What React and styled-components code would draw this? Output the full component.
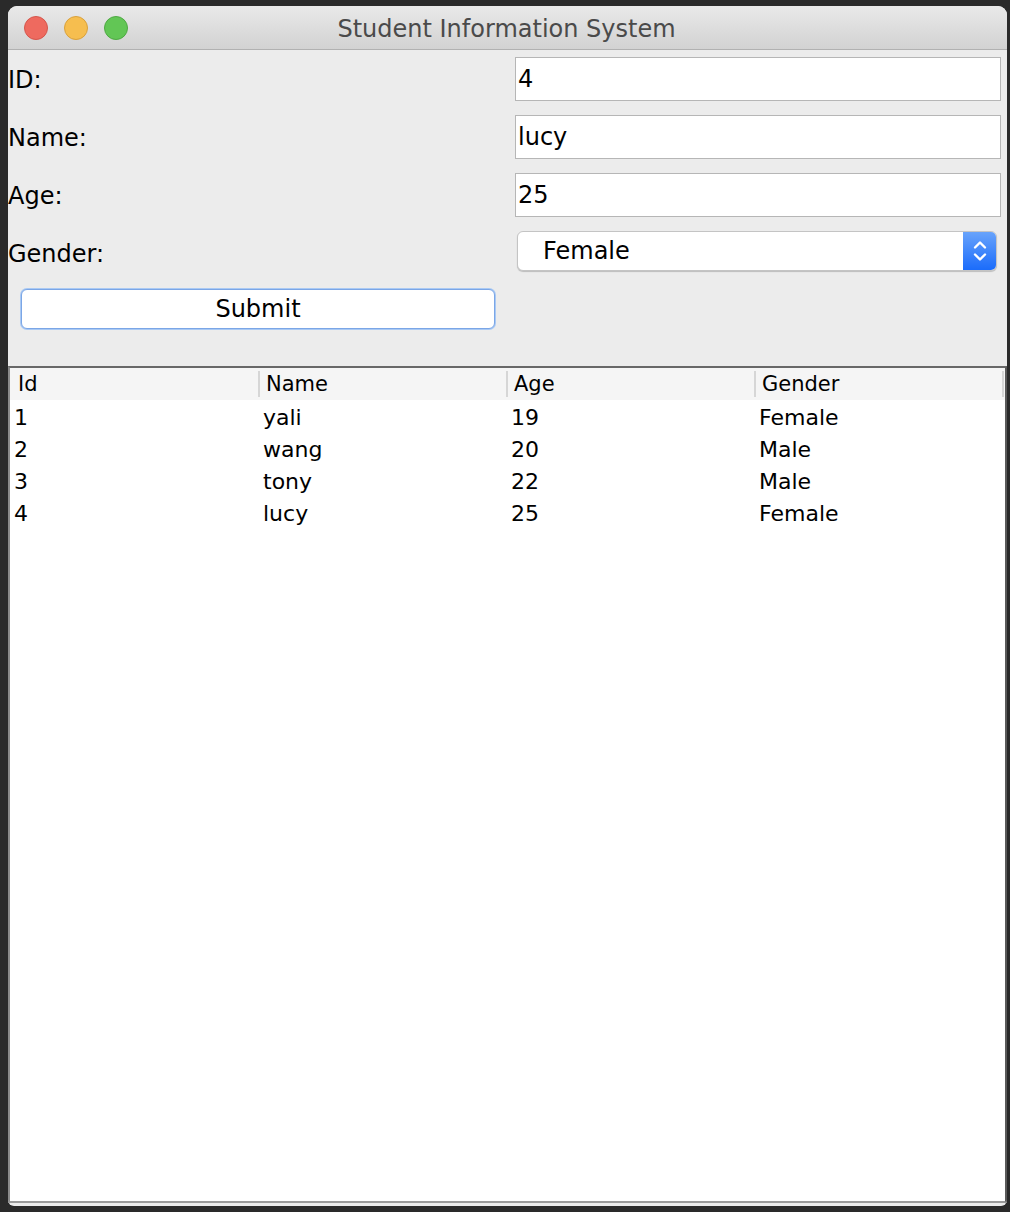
import React from "react";
import styled, { createGlobalStyle } from "styled-components";

const students = [
  { id: 1, name: "yali", age: 19, gender: "Female" },
  { id: 2, name: "wang", age: 20, gender: "Male" },
  { id: 3, name: "tony", age: 22, gender: "Male" },
  { id: 4, name: "lucy", age: 25, gender: "Female" },
];

const fields = [
  { label: "ID:", value: "4" },
  { label: "Name:", value: "lucy" },
  { label: "Age:", value: "25" },
];

function App() {
  return (
    <>
      <GlobalStyle />
      <Window>
        <TitleBar>
          <Lights>
            <Light color="#ee6a5f" edge="#d5564c" />
            <Light color="#f6be4f" edge="#d9a13c" />
            <Light color="#62c655" edge="#4ea943" />
          </Lights>
          <Title>Student Information System</Title>
        </TitleBar>

        {/* form grid: label on the left, control on the right */}
        <Form>
          {fields.map((f) => (
            <React.Fragment key={f.label}>
              <Label>{f.label}</Label>
              <Cell>
                <TextField readOnly defaultValue={f.value} />
              </Cell>
            </React.Fragment>
          ))}
          <Label>Gender:</Label>
          <Cell>
            <Combo>
              <ComboText>Female</ComboText>
              <Stepper>
                <svg width="16" height="26" viewBox="0 0 16 26" fill="none">
                  <path d="M3 9.5 L8 4.5 L13 9.5" stroke="#fff" strokeWidth="2.4" strokeLinecap="round" strokeLinejoin="round" />
                  <path d="M3 16.5 L8 21.5 L13 16.5" stroke="#fff" strokeWidth="2.4" strokeLinecap="round" strokeLinejoin="round" />
                </svg>
              </Stepper>
            </Combo>
          </Cell>
          <ButtonCell>
            <SubmitButton>Submit</SubmitButton>
          </ButtonCell>
          <div />
        </Form>

        <TablePane>
          <HeaderRow>
            <HeadCell first>Id</HeadCell>
            <HeadCell>Name</HeadCell>
            <HeadCell>Age</HeadCell>
            <HeadCell>Gender</HeadCell>
          </HeaderRow>
          {students.map((s) => (
            <Row key={s.id}>
              <BodyCell first>{s.id}</BodyCell>
              <BodyCell>{s.name}</BodyCell>
              <BodyCell>{s.age}</BodyCell>
              <BodyCell>{s.gender}</BodyCell>
            </Row>
          ))}
        </TablePane>
      </Window>
    </>
  );
}

const GlobalStyle = createGlobalStyle`
  html, body {
    margin: 0;
    background: #2a2a2a;
  }
  body {
    font-family: "DejaVu Sans", "Liberation Sans", sans-serif;
    color: #000;
  }
`;

const Window = styled.div`
  margin: 6px 0 0 8px;
  width: 999px;
  height: 1200px;
  display: flex;
  flex-direction: column;
  background: #ececec;
  border-radius: 9px 9px 6px 6px;
  overflow: hidden;
`;

const TitleBar = styled.div`
  position: relative;
  height: 43px;
  flex-shrink: 0;
  display: flex;
  align-items: center;
  justify-content: center;
  background: linear-gradient(#e9e9e9, #d2d2d2);
  border-bottom: 1px solid #b1b1b1;
`;

const Lights = styled.div`
  position: absolute;
  left: 16px;
  top: 10px;
  display: flex;
  gap: 16px;
`;

const Light = styled.span`
  width: 24px;
  height: 24px;
  box-sizing: border-box;
  border-radius: 50%;
  background: ${(p) => p.color};
  border: 1px solid ${(p) => p.edge};
`;

const Title = styled.div`
  font-size: 24px;
  color: #4a4a4a;
  margin-left: -2px;
  padding-top: 2px;
`;

const Form = styled.div`
  display: grid;
  grid-template-columns: 500px 499px;
  grid-auto-rows: 58px;
  height: 316px;
  flex-shrink: 0;
`;

const Label = styled.div`
  display: flex;
  align-items: center;
  font-size: 24px;
  padding-top: 2px;
`;

const Cell = styled.div`
  display: flex;
  align-items: center;
  padding: 0 6px 0 7px;
`;

const TextField = styled.input`
  width: 100%;
  height: 44px;
  box-sizing: border-box;
  border: 1px solid #b6b6b6;
  background: #fff;
  font: inherit;
  font-size: 24px;
  padding: 0 0 0 2px;
  outline: none;
  color: #000;
`;

const Combo = styled.div`
  width: 100%;
  height: 40px;
  margin: -4px 4px 0 2px;
  box-sizing: border-box;
  display: flex;
  align-items: center;
  background: #fff;
  border: 1px solid #c4c4c4;
  border-radius: 6px;
  box-shadow: 0 1px 1px rgba(0, 0, 0, 0.2);
  overflow: hidden;
`;

const ComboText = styled.span`
  flex: 1;
  font-size: 24px;
  padding-left: 25px;
`;

const Stepper = styled.div`
  width: 33px;
  height: 100%;
  display: flex;
  align-items: center;
  justify-content: center;
  background: linear-gradient(#68a3fb, #1b6cfb);
`;

const ButtonCell = styled.div`
  padding: 7px 13px 0 13px;
`;

const SubmitButton = styled.button`
  width: 100%;
  height: 40px;
  background: #fff;
  border: 1px solid #7ba6e6;
  box-shadow: 0 0 0 1px #a9c9f4;
  border-radius: 6px;
  font-family: inherit;
  font-size: 24px;
  color: #000;
  padding: 0;
`;

const TablePane = styled.div`
  flex: 1;
  background: #fff;
  border-top: 2px solid #686868;
  border-left: 2px solid #8a8a8a;
  border-right: 2px solid #5a5a5a;
  border-bottom: 2px solid #9a9a9a;
  margin-bottom: 3px;
`;

const HeaderRow = styled.div`
  display: grid;
  grid-template-columns: 250px repeat(3, 248px);
  height: 32px;
  background: #f5f5f5;
  align-items: center;
`;

const HeadCell = styled.div`
  font-size: 21px;
  padding-left: ${(p) => (p.first ? 8 : 6)}px;
  line-height: 26px;
  border-right: 2px solid #d6d6d6;
`;

const Row = styled.div`
  display: grid;
  grid-template-columns: 250px repeat(3, 248px);
  height: 32px;
  align-items: center;
`;

const BodyCell = styled.div`
  font-size: 22px;
  padding-left: ${(p) => (p.first ? 4 : 3)}px;
  padding-top: 2px;
`;

export default App;
